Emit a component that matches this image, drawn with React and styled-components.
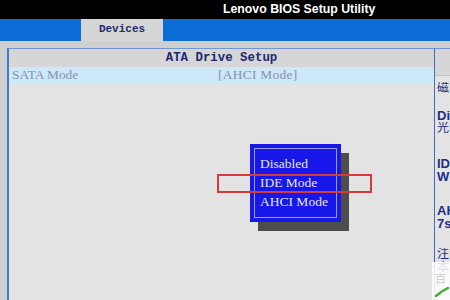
import React from 'react'
import styled, { createGlobalStyle } from 'styled-components';

const GlobalStyle = createGlobalStyle`
    html, body {
        margin : 0;
        padding : 0;
        background : #c4c4c4;
    }
    body {
        width : 450px;
        height : 300px;
        overflow : hidden;
        font-family : "Liberation Sans", Arial, sans-serif;
    }
`;

const Screen = styled.div`
    position : relative;
    width : 450px;
    height : 300px;
    overflow : hidden;
    display : flex;
    flex-direction : column;
`;

const TitleBar = styled.div`
    height : 19px;
    background : #000;
    color : #fff;
    font-weight : bold;
    font-size : 12.3px;
    line-height : 18px;
    padding-left : 223px;
    white-space : nowrap;
`;

const TabBar = styled.div`
    height : 22px;
    background : #0b6dd5;
    display : flex;
`;

const Tab = styled.div`
    margin-left : 81px;
    width : 82px;
    background : ${(p) => (p.active ? '#d5d5d5' : 'transparent')};
    color : #1c2a6c;
    font-family : "Liberation Mono", monospace;
    font-weight : bold;
    font-size : 11px;
    line-height : 21px;
    text-align : center;
`;

const Body = styled.div`
    flex : 1;
    background : #cfcfcf;
    padding : 7px 0 0 7px;
    display : flex;
    min-height : 0;
`;

const MainPanel = styled.div`
    width : 425px;
    background : #e3e3e3;
    border-left : 2px solid #3f7ad2;
    border-top : 1px solid #6f97d6;
    display : flex;
    flex-direction : column;
`;

const PanelHeader = styled.div`
    height : 18px;
    background : #d6d6d6;
    color : #1b2a72;
    font-family : "Liberation Mono", monospace;
    font-weight : bold;
    font-size : 12.4px;
    line-height : 19px;
    text-align : center;
`;

const OptionRow = styled.div`
    height : 16px;
    background : ${(p) => (p.selected ? '#cde8f8' : 'transparent')};
    color : #8594ad;
    font-family : "Liberation Serif", "Times New Roman", serif;
    font-size : 13.4px;
    line-height : 16px;
    display : flex;
`;

const Label = styled.span`
    width : 206px;
    padding-left : 3px;
`;

const Value = styled.span`
    letter-spacing : 0.3px;
`;

const HelpPanel = styled.div`
    flex : 1;
    background : #e3e3e3;
    border-left : 1px solid #3f6fc2;
    border-top : 1px solid #6f97d6;
    display : flex;
    flex-direction : column;
    overflow : hidden;
`;

const HelpHeader = styled.div`
    height : 26px;
    background : #d6d6d6;
    border-bottom : 1px solid #b8c8dc;
`;

const HelpText = styled.div`
    padding : 6px 0 0 2px;
    color : #1e2f86;
    font-family : "Liberation Sans", "Noto Sans CJK SC", sans-serif;
    font-size : 12px;
    line-height : 13px;
    white-space : nowrap;
`;

const HelpLine = styled.div`
    height : 13px;
    overflow : hidden;
    margin-bottom : ${(p) => p.gap || 0}px;
    font-weight : ${(p) => (p.cjk ? 'normal' : 'bold')};
    font-size : ${(p) => (p.cjk ? 12 : 13)}px;
`;

const Popup = styled.div`
    position : absolute;
    left : 250px;
    top : 144px;
    width : 91px;
    height : 78px;
    background : #1717ea;
    box-shadow : 8px 9px 0 #4d4d4d;
    padding : 4px;
    box-sizing : border-box;
`;

const PopupInner = styled.div`
    height : 100%;
    border : 1px solid #9a9cf2;
    box-sizing : border-box;
    padding : 5px 0 0 5px;
    display : flex;
    flex-direction : column;
`;

const PopupItem = styled.div`
    color : #e6e6ee;
    font-family : "Liberation Serif", "Times New Roman", serif;
    font-size : 13.5px;
    line-height : 19px;
    white-space : nowrap;
`;

const Marker = styled.div`
    position : absolute;
    left : 217px;
    top : 174px;
    width : 155px;
    height : 19px;
    border : 2px solid #d33a3a;
    box-sizing : border-box;
`;

const Watermark = styled.div`
    position : absolute;
    left : 432px;
    top : 262px;
    width : 18px;
    height : 38px;
    background : rgba(255, 255, 255, 0.85);
    color : #cbcbcb;
    font-family : "Noto Sans CJK SC", sans-serif;
    font-size : 11px;
    line-height : 14px;
    padding : 9px 0 0 3px;
    box-sizing : border-box;
    overflow : hidden;
    display : flex;
    flex-direction : column;
    gap : 2px;
`;

function CheckMark() {
    return (
        <svg width="14" height="10" viewBox="0 0 14 10">
            <path d="M1 9 L6 5 L13 1" stroke="#3fae3f" strokeWidth="2.5" fill="none" strokeLinecap="round" />
        </svg>
    )
}

function App() {
    return (
        <Screen>
            <GlobalStyle />
            <TitleBar>Lenovo BIOS Setup Utility</TitleBar>
            <TabBar>
                <Tab active>Devices</Tab>
            </TabBar>
            <Body>
                <MainPanel>
                    <PanelHeader>ATA Drive Setup</PanelHeader>
                    <OptionRow selected>
                        <Label>SATA Mode</Label>
                        <Value>[AHCI Mode]</Value>
                    </OptionRow>
                </MainPanel>
                <HelpPanel>
                    <HelpHeader />
                    <HelpText>
                        <HelpLine cjk gap={14}>磁</HelpLine>
                        <HelpLine>Di</HelpLine>
                        <HelpLine cjk gap={22}>光</HelpLine>
                        <HelpLine>ID</HelpLine>
                        <HelpLine gap={21}>W</HelpLine>
                        <HelpLine>AH</HelpLine>
                        <HelpLine gap={18}>7s</HelpLine>
                        <HelpLine cjk>注</HelpLine>
                        <HelpLine cjk>本</HelpLine>
                    </HelpText>
                </HelpPanel>
            </Body>
            <Popup>
                <PopupInner>
                    <PopupItem>Disabled</PopupItem>
                    <PopupItem>IDE Mode</PopupItem>
                    <PopupItem>AHCI Mode</PopupItem>
                </PopupInner>
            </Popup>
            <Marker />
            <Watermark>
                <span>百</span>
                <CheckMark />
            </Watermark>
        </Screen>
    )
}

export default App
